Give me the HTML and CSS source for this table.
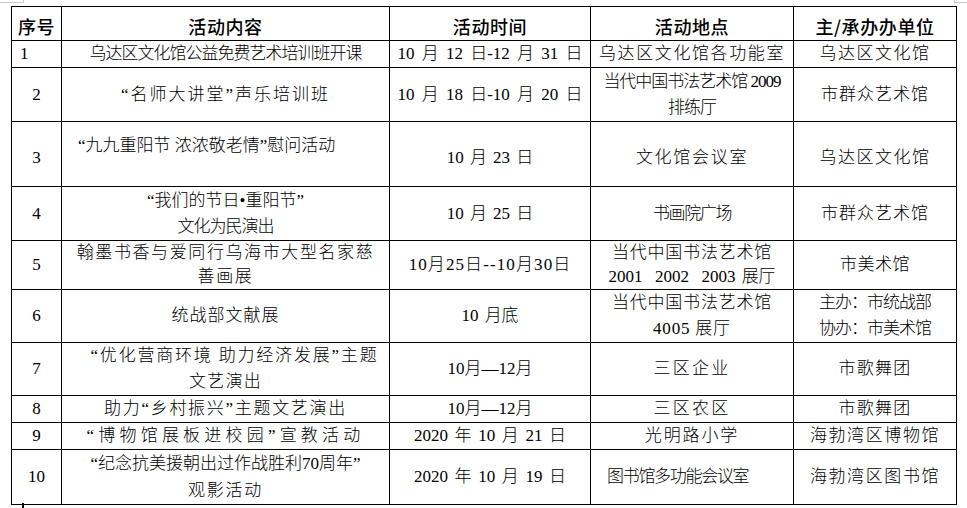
FILE: index.html
```html
<!DOCTYPE html>
<html lang="zh-CN">
<head>
<meta charset="utf-8">
<title>活动安排表</title>
<link rel="stylesheet" href="styles.css">
</head>
<body>
<span class="mark mark-tl"></span>
<span class="mark mark-tr"></span>
<span class="mark mark-bl"></span>
<table class="schedule">
  <colgroup>
    <col class="c-no"><col class="c-act"><col class="c-time"><col class="c-place"><col class="c-unit">
  </colgroup>
  <thead>
    <tr class="h34">
      <th>序号</th><th>活动内容</th><th>活动时间</th><th>活动地点</th><th>主/承办办单位</th>
    </tr>
  </thead>
  <tbody>
    <tr class="h27">
      <td class="no no-left">1</td>
      <td class="ls-n1">乌达区文化馆公益免费艺术培训班开课</td>
      <td class="ws3">10 月 12 日-12 月 31 日</td>
      <td class="ls16">乌达区文化馆各功能室</td>
      <td class="ls15">乌达区文化馆</td>
    </tr>
    <tr class="h54">
      <td class="no">2</td>
      <td class="ls2">“名师大讲堂”声乐培训班</td>
      <td class="ws3">10 月 18 日-10 月 20 日</td>
      <td class="ls-n1">当代中国书法艺术馆 2009<br>排练厅</td>
      <td class="ls1">市群众艺术馆</td>
    </tr>
    <tr class="h65">
      <td class="no drop">3</td>
      <td class="left lift">“九九重阳节 浓浓敬老情”慰问活动</td>
      <td class="ws2 drop">10 月 23 日</td>
      <td class="ls17 drop">文化馆会议室</td>
      <td class="ls15 drop">乌达区文化馆</td>
    </tr>
    <tr class="h54">
      <td class="no">4</td>
      <td><div>“我们的节日•重阳节”</div><div class="ls-n1">文化为民演出</div></td>
      <td class="ws2">10 月 25 日</td>
      <td class="ls-n14">书画院广场</td>
      <td class="ls1">市群众艺术馆</td>
    </tr>
    <tr class="h48">
      <td class="no">5</td>
      <td class="ls16 lh24">翰墨书香与爱同行乌海市大型名家慈<br>善画展</td>
      <td class="ls11">10月25日--10月30日</td>
      <td class="lh24"><div class="ls08">当代中国书法艺术馆</div><div class="ws2">2001&nbsp; 2002&nbsp; 2003 展厅</div></td>
      <td class="ls05">市美术馆</td>
    </tr>
    <tr class="h53">
      <td class="no">6</td>
      <td class="ls1">统战部文献展</td>
      <td class="ws2">10 月底</td>
      <td class="ls08">当代中国书法艺术馆<br>4005 展厅</td>
      <td class="ls-n1">主办：市统战部<br>协办：市美术馆</td>
    </tr>
    <tr class="h53">
      <td class="no">7</td>
      <td class="lh26"><div class="ls18 indent">“优化营商环境 助力经济发展”主题</div><div class="ls12">文艺演出</div></td>
      <td>10月—12月</td>
      <td class="ls22">三区企业</td>
      <td class="ls12">市歌舞团</td>
    </tr>
    <tr class="h27">
      <td class="no">8</td>
      <td class="ls17">助力“乡村振兴”主题文艺演出</td>
      <td>10月—12月</td>
      <td class="ls22">三区农区</td>
      <td class="ls12">市歌舞团</td>
    </tr>
    <tr class="h27">
      <td class="no">9</td>
      <td class="ls42">“博物馆展板进校园”宣教活动</td>
      <td class="ws24">2020 年 10 月 21 日</td>
      <td class="ls19">光明路小学</td>
      <td class="ls16">海勃湾区博物馆</td>
    </tr>
    <tr class="h54">
      <td class="no">10</td>
      <td class="lh27"><div>“纪念抗美援朝出过作战胜利70周年”</div><div class="ls18">观影活动</div></td>
      <td class="ws24">2020 年 10 月 19 日</td>
      <td class="left ls-n13">图书馆多功能会议室</td>
      <td class="ls16">海勃湾区图书馆</td>
    </tr>
  </tbody>
</table>
</body>
</html>
```

FILE: styles.css
```css
html, body {
  margin: 0;
  padding: 0;
  background: #ffffff;
}

body {
  position: relative;
  width: 967px;
  height: 508px;
  overflow: hidden;
  font-family: "Liberation Serif", "Noto Sans CJK SC", serif;
  color: #000;
}

.mark {
  position: absolute;
  display: block;
}

.mark-tl {
  left: 0;
  top: 0;
  width: 23px;
  height: 2px;
  border-right: 1px solid #c8c8c8;
  border-bottom: 1px solid #c8c8c8;
}

.mark-tr {
  left: 954px;
  top: 0;
  width: 13px;
  height: 2px;
  border-left: 1px solid #c8c8c8;
  border-bottom: 1px solid #c8c8c8;
}

.mark-bl {
  left: 22px;
  top: 503px;
  width: 2px;
  height: 5px;
  background: #000;
}

.schedule {
  margin: 6px 0 0 11px;
  border-collapse: collapse;
  table-layout: fixed;
  width: 945px;
}

.c-no { width: 50px; }
.c-act { width: 328px; }
.c-time { width: 201px; }
.c-place { width: 203px; }
.c-unit { width: 163px; }

.schedule th,
.schedule td {
  border: 1px solid #000;
  padding: 0 4px;
  text-align: center;
  vertical-align: middle;
  white-space: nowrap;
  font-size: 17px;
  line-height: 26px;
  font-weight: 300;
}

.schedule th {
  font-family: "Noto Sans CJK SC", sans-serif;
  font-size: 18px;
  font-weight: 500;
  letter-spacing: 0.6px;
  padding-top: 5px;
  line-height: 26px;
}

.h34 { height: 34px; }
.h27 { height: 27px; }
.h48 { height: 48px; }
.h53 { height: 53px; }
.h54 { height: 54px; }
.h65 { height: 65px; }

.schedule .no-left { text-align: left; padding-left: 8px; }

.schedule .left { text-align: left; padding-left: 16px; }

.schedule .lift { vertical-align: top; padding-top: 11px; }
.schedule .drop { padding-top: 7px; }

.schedule .indent { text-indent: 18px; }

.schedule .lh24 { line-height: 24px; }
.schedule .lh26 { line-height: 26px; }
.schedule .lh27 { line-height: 27px; }

.ls-n14 { letter-spacing: -1.4px; }
.ls-n13 { letter-spacing: -1.3px; }
.ls-n1 { letter-spacing: -1px; }
.ls05 { letter-spacing: 0.5px; }
.ls08 { letter-spacing: 0.8px; }
.ls1 { letter-spacing: 1px; }
.ls11 { letter-spacing: 1.1px; }
.ls12 { letter-spacing: 1.2px; }
.ls15 { letter-spacing: 1.5px; }
.ls16 { letter-spacing: 1.6px; }
.ls17 { letter-spacing: 1.7px; }
.ls18 { letter-spacing: 1.8px; }
.ls19 { letter-spacing: 1.9px; }
.ls2 { letter-spacing: 2px; }
.ls22 { letter-spacing: 2.2px; }
.ls42 { letter-spacing: 4.2px; }

.ws2 { word-spacing: 2px; }
.ws24 { word-spacing: 2.4px; }
.ws3 { word-spacing: 3px; }
```
